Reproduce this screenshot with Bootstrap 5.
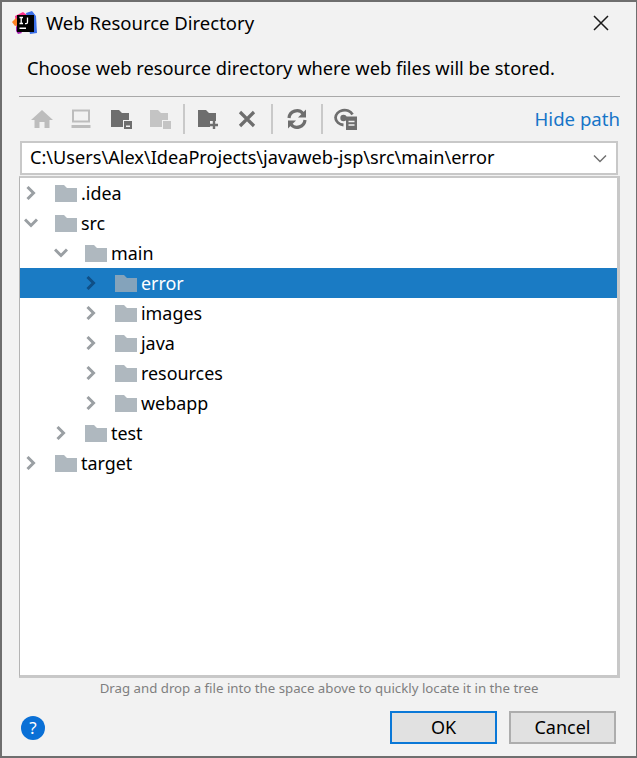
<!DOCTYPE html>
<html>
<head>
    <title>Web Resource Directory</title>
    <link href="https://cdn.jsdelivr.net/npm/bootstrap@5.3.0/dist/css/bootstrap.min.css" rel="stylesheet">
    <style>
        html, body { height: 100%; }
        body { background: #f2f2f2; color: #000; font-family: "Noto Sans", "Open Sans", sans-serif; font-size: 18px; overflow: hidden; }
        .dlg { height: 758px; border: 2px solid #6f6f6f; border-right-width: 1px; background: #f2f2f2; }
        .dlg-title { height: 45px; padding: 0 27px 4px 10px; }
        .dlg-title span { font-size: 18.5px; margin-left: 8px; }
        .dlg-desc { margin: 5px 0 0 25px; height: 31px; line-height: 31px; font-size: 18.25px; }
        .dlg-rule { height: 1px; background: #a9a9a9; margin: 13px 16px 0 17px; }
        .tools { height: 44px; padding: 0 16px 0 20px; }
        .tool { width: 39.5px; }
        .tool-sep { width: 2px; height: 30px; background: #c9c9c9; margin: 0 3px 0 3px; }
        .tool-sep.wide { margin: 0 4px 0 4px; }
        .hide-link { color: #1675c8; text-decoration: none; font-size: 18.6px; }
        .path-box { height: 34px; margin: 0 18px 0 18px; background: #fff; border: 2px solid #c8c8c8; padding: 0 9px 0 8px; font-size: 18.15px; }
        .file-tree { height: 502px; margin: 1px 16px 0 17px; background: #fff; border: 2px solid #c8c8c8; border-left: 1px solid #b4b4b4; border-bottom-width: 3px; border-right-width: 3px; }
        .tree-row { height: 30px; font-size: 17.9px; }
        .tree-row.on { background: #1a7bc4; color: #fff; }
        .tree-text { margin-left: 4px; }
        .tw { width: 24px; margin-left: -1px; margin-right: 12px; }
        .lvl-0 { padding-left: 0; }
        .lvl-1 { padding-left: 30px; }
        .lvl-2 { padding-left: 60px; }
        .tree-hint { height: 22px; line-height: 22px; color: #7f7f7f; font-size: 13.25px; margin-top: -1px; }
        .dlg-foot { padding: 12px 20px 0 19px; }
        .help-dot { width: 24px; height: 24px; border-radius: 50%; background: #0a70d6; color: #fff; font-size: 17px; margin-top: 5px; }
        .dlg-btn { width: 107px; height: 33px; padding: 0; border-radius: 0; background: #e1e1e1; border: 2px solid #adadad; color: #000; font-size: 18px; line-height: 27px; }
        .dlg-btn.dflt { border-color: #0a78d7; }
    </style>
</head>
<body>
    <svg width="0" height="0" class="d-block position-absolute">
        <symbol id="folder" viewBox="0 0 22 18"><path d="M0 1h9l3 3h10v14H0z" fill="#afb8bf"/></symbol>
        <symbol id="folder-sel" viewBox="0 0 22 18"><path d="M0 1h9l3 3h10v14H0z" fill="#84a3bb"/></symbol>
        <symbol id="chev-r" viewBox="0 0 12 14"><path d="M2.500 1 8.500 7l-6 6" fill="none" stroke="#9a9fa3" stroke-width="3"/></symbol>
        <symbol id="chev-d" viewBox="0 0 14 12"><path d="M1 2.500 7 8.500l6-6" fill="none" stroke="#9a9fa3" stroke-width="3"/></symbol>
        <symbol id="chev-sel" viewBox="0 0 12 14"><path d="M2.500 1 8.500 7l-6 6" fill="none" stroke="#0f4f86" stroke-width="3"/></symbol>
    </svg>

    <div class="dlg d-flex flex-column">
        <div class="dlg-title d-flex align-items-center">
            <svg width="26" height="26" viewBox="0 0 26 26">
                <path d="M3 6 11 2l4 3-6 18-4-2z" fill="#fc318c"/>
                <path d="M0 12l4-4 4 6-5 2z" fill="#fd8224"/>
                <path d="M14 3l6-2 4 5 1 17-7 1z" fill="#3b6fe8"/>
                <path d="M4 16l6 7-4 1-2-3z" fill="#a51fb0"/>
                <rect x="5" y="5" width="17" height="17" fill="#000"/>
                <path d="M7.500 7.500h3.500M9.200 7.500v6M7.500 13.500h3.500M15.500 7.500v4.800q0 1.300-1.300 1.300h-1.200" fill="none" stroke="#fff" stroke-width="1.300"/>
                <rect x="7.500" y="17.500" width="6.500" height="1.500" fill="#fff"/>
            </svg>
            <span>Web Resource Directory</span>
            <svg class="ms-auto" width="16" height="16" viewBox="0 0 16 16"><path d="M1 1l14 14M15 1 1 15" stroke="#1a1a1a" stroke-width="1.500" fill="none"/></svg>
        </div>
        <div class="dlg-desc">Choose web resource directory where web files will be stored.</div>
        <div class="dlg-rule"></div>

        <div class="tools d-flex align-items-center">
            <div class="tool d-flex justify-content-center">
                <svg width="22" height="22" viewBox="0 0 22 22"><path d="M11 2 0 12h3.500v8h5v-6h5v6h5v-8H22z" fill="#bdbdbd"/></svg>
            </div>
            <div class="tool d-flex justify-content-center">
                <svg width="22" height="22" viewBox="0 0 22 22"><path d="M3 2.500h16v11H3z" fill="none" stroke="#bdbdbd" stroke-width="2"/><rect x="1.500" y="17" width="19" height="3" fill="#bdbdbd"/></svg>
            </div>
            <div class="tool d-flex justify-content-center">
                <svg width="22" height="22" viewBox="0 0 22 22"><path d="M1 2h8l3 3h7v7h-6v7H1z" fill="#6e6e6e"/><rect x="14" y="13" width="8" height="8" fill="#6e6e6e"/><rect x="16" y="17.500" width="4" height="1.500" fill="#f2f2f2"/></svg>
            </div>
            <div class="tool d-flex justify-content-center">
                <svg width="22" height="22" viewBox="0 0 22 22"><path d="M1 2h8l3 3h7v7h-6v7H1z" fill="#c4c4c4"/><rect x="14" y="13" width="8" height="8" fill="#c4c4c4"/></svg>
            </div>
            <div class="tool-sep"></div>
            <div class="tool d-flex justify-content-center">
                <svg width="22" height="22" viewBox="0 0 22 22"><path d="M1 2h8l3 3h7v8h-6v6H1z" fill="#6e6e6e"/><path d="M17 13v8M13 17h8" stroke="#6e6e6e" stroke-width="2.400" fill="none"/></svg>
            </div>
            <div class="tool d-flex justify-content-center">
                <svg width="22" height="22" viewBox="0 0 22 22"><path d="M4 4l14 14M18 4 4 18" stroke="#6e6e6e" stroke-width="3.200" fill="none"/></svg>
            </div>
            <div class="tool-sep wide"></div>
            <div class="tool d-flex justify-content-center">
                <svg width="22" height="22" viewBox="0 0 22 22"><path d="M3 10a8 8 0 0 1 14-4.500M19 12a8 8 0 0 1-14 4.500" fill="none" stroke="#6e6e6e" stroke-width="3.200"/><path d="M20 1.500v8h-8zM2 20.500v-8h8z" fill="#6e6e6e"/></svg>
            </div>
            <div class="tool-sep wide"></div>
            <div class="tool d-flex justify-content-center">
                <svg width="24" height="22" viewBox="0 0 24 22"><path d="M1.500 10a9 8 0 0 1 17-3.500M1.500 10a9 8 0 0 0 8 7" fill="none" stroke="#6e6e6e" stroke-width="2.800"/><circle cx="9.500" cy="10" r="3.200" fill="#6e6e6e"/><rect x="12" y="8.500" width="11" height="13.500" fill="#6e6e6e"/><path d="M14.500 13.500h6M14.500 17h6" stroke="#f2f2f2" stroke-width="1.500"/></svg>
            </div>
            <a href="#" class="hide-link ms-auto">Hide path</a>
        </div>

        <div class="path-box d-flex align-items-center justify-content-between">
            <span>C:\Users\Alex\IdeaProjects\javaweb-jsp\src\main\error</span>
            <svg width="14" height="9" viewBox="0 0 14 9"><path d="M1 1.500 7 7.500l6-6" fill="none" stroke="#707070" stroke-width="1.500"/></svg>
        </div>

        <div class="file-tree" id="tree"></div>

        <div class="tree-hint text-center">Drag and drop a file into the space above to quickly locate it in the tree</div>

        <div class="dlg-foot d-flex align-items-start">
            <div class="help-dot d-flex align-items-center justify-content-center">?</div>
            <div class="ms-auto d-flex gap-2">
                <button type="button" class="btn dlg-btn dflt">OK</button>
                <button type="button" class="btn dlg-btn ms-1">Cancel</button>
            </div>
        </div>
    </div>

    <script>
        let rows = [
            { name: ".idea", lvl: 0, open: false },
            { name: "src", lvl: 0, open: true },
            { name: "main", lvl: 1, open: true },
            { name: "error", lvl: 2, open: false, sel: true },
            { name: "images", lvl: 2, open: false },
            { name: "java", lvl: 2, open: false },
            { name: "resources", lvl: 2, open: false },
            { name: "webapp", lvl: 2, open: false },
            { name: "test", lvl: 1, open: false },
            { name: "target", lvl: 0, open: false }
        ];

        let tree = document.getElementById("tree");
        rows.forEach(row => {
            let el = document.createElement("div");
            el.className = "tree-row d-flex align-items-center lvl-" + row.lvl + (row.sel ? " on" : "");
            let chev = row.sel ? "chev-sel" : (row.open ? "chev-d" : "chev-r");
            let w = row.open ? 14 : 12, h = row.open ? 12 : 14;
            el.innerHTML = `
                <span class="tw d-flex justify-content-center"><svg width="${w}" height="${h}"><use href="#${chev}"/></svg></span>
                <svg width="22" height="18"><use href="#${row.sel ? "folder-sel" : "folder"}"/></svg>
                <span class="tree-text">${row.name}</span>`;
            tree.appendChild(el);
        });
    </script>
    <script src="https://cdn.jsdelivr.net/npm/bootstrap@5.3.0/dist/js/bootstrap.bundle.min.js"></script>
</body>
</html>
